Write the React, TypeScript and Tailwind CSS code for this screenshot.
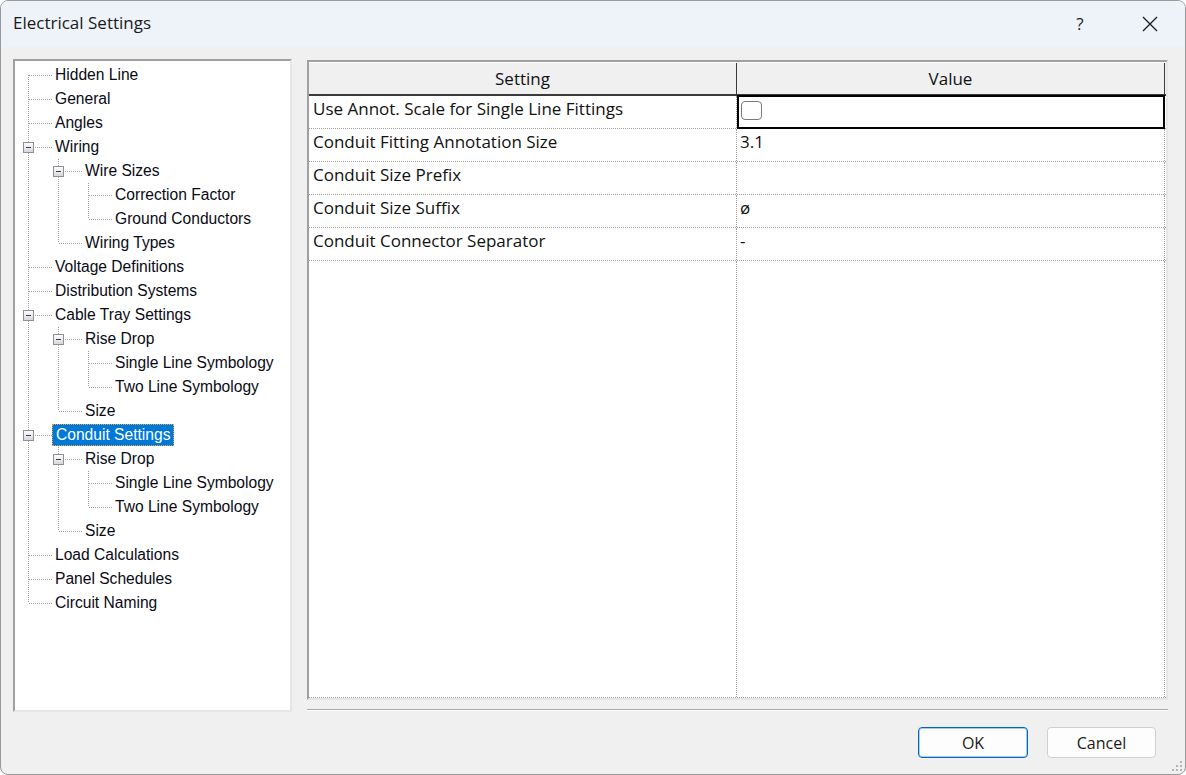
import React from 'react';

type TreeNode = { label: string; level: number; open?: boolean; selected?: boolean };

const tree: TreeNode[] = [
  { label: 'Hidden Line', level: 0 },
  { label: 'General', level: 0 },
  { label: 'Angles', level: 0 },
  { label: 'Wiring', level: 0, open: true },
  { label: 'Wire Sizes', level: 1, open: true },
  { label: 'Correction Factor', level: 2 },
  { label: 'Ground Conductors', level: 2 },
  { label: 'Wiring Types', level: 1 },
  { label: 'Voltage Definitions', level: 0 },
  { label: 'Distribution Systems', level: 0 },
  { label: 'Cable Tray Settings', level: 0, open: true },
  { label: 'Rise Drop', level: 1, open: true },
  { label: 'Single Line Symbology', level: 2 },
  { label: 'Two Line Symbology', level: 2 },
  { label: 'Size', level: 1 },
  { label: 'Conduit Settings', level: 0, open: true, selected: true },
  { label: 'Rise Drop', level: 1, open: true },
  { label: 'Single Line Symbology', level: 2 },
  { label: 'Two Line Symbology', level: 2 },
  { label: 'Size', level: 1 },
  { label: 'Load Calculations', level: 0 },
  { label: 'Panel Schedules', level: 0 },
  { label: 'Circuit Naming', level: 0 },
];

const rows = [
  { setting: 'Use Annot. Scale for Single Line Fittings', value: null },
  { setting: 'Conduit Fitting Annotation Size', value: '3.1' },
  { setting: 'Conduit Size Prefix', value: '' },
  { setting: 'Conduit Size Suffix', value: 'ø' },
  { setting: 'Conduit Connector Separator', value: '-' },
];

// last sibling = no later node on the same level before the parent closes
const isLast = (i: number) => {
  const lvl = tree[i].level;
  for (let j = i + 1; j < tree.length; j++) {
    if (tree[j].level < lvl) return true;
    if (tree[j].level === lvl) return false;
  }
  return true;
};

const ancestorAt = (i: number, lvl: number) => {
  for (let j = i - 1; j >= 0; j--) if (tree[j].level === lvl) return j;
  return -1;
};

const LINE = '#a0a0a0';

const GuideCell: React.FC<{ on: boolean }> = ({ on }) => (
  <svg width="30" height="24" className="shrink-0 block" shapeRendering="crispEdges">
    {on && <line x1="12.5" y1="0" x2="12.5" y2="24" stroke={LINE} strokeDasharray="1 1" />}
  </svg>
);

const ConnectorCell: React.FC<{ first: boolean; last: boolean; open?: boolean }> = ({ first, last, open }) => (
  <svg width="36" height="24" className="shrink-0 block" shapeRendering="crispEdges">
    {!first && <line x1="12.5" y1="0" x2="12.5" y2="12" stroke={LINE} strokeDasharray="1 1" />}
    {!last && <line x1="12.5" y1="12" x2="12.5" y2="24" stroke={LINE} strokeDasharray="1 1" />}
    <line x1="13" y1="12.5" x2="36" y2="12.5" stroke={LINE} strokeDasharray="1 1" />
    {open && (
      <g>
        <defs>
          <linearGradient id="exp" x1="0" y1="0" x2="0" y2="1">
            <stop offset="0" stopColor="#ffffff" />
            <stop offset="1" stopColor="#d6d6d6" />
          </linearGradient>
        </defs>
        <rect x="7.5" y="7.5" width="10" height="10" fill="url(#exp)" stroke="#8f8f8f" rx="1" />
        <line x1="10" y1="12.5" x2="15" y2="12.5" stroke="#2b3f6b" />
      </g>
    )}
  </svg>
);

const Tree: React.FC = () => (
  <div className="w-[279px] h-[653px] shrink-0 bg-white border-2 border-t-[#a0a0a0] border-l-[#a0a0a0] border-r-[#e6e6e6] border-b-[#e6e6e6] pt-[2px] pl-px">
    {tree.map((n, i) => {
      const last = isLast(i);
      return (
        <div key={i} className="flex items-center h-6">
          {Array.from({ length: n.level }).map((_, k) => (
            <GuideCell key={k} on={!isLast(ancestorAt(i, k))} />
          ))}
          <ConnectorCell first={i === 0} last={last} open={n.open} />
          {n.selected ? (
            <span className="h-[22px] flex items-center px-[3px] bg-[#0078d7] text-white border border-dotted border-[#f5a040] whitespace-nowrap">
              {n.label}
            </span>
          ) : (
            <span className="h-[22px] flex items-center px-[3px] text-[#0a0a14] whitespace-nowrap">{n.label}</span>
          )}
        </div>
      );
    })}
  </div>
);

const Grid: React.FC = () => (
  <div className="w-[861px] h-[640px] mt-px flex flex-col bg-white border-2 border-t-[#a0a0a0] border-l-[#a0a0a0] border-r-[#e6e6e6] border-b-[#e6e6e6] font-['Open_Sans',sans-serif] text-[17px] text-[#111]">
    <div className="grid grid-cols-[428px_1fr] h-[34px] bg-[#f0f0f0] border-t border-white border-b-2 border-b-[#3a3a3a]">
      <div className="flex items-center justify-center border-r border-[#3a3a3a]">Setting</div>
      <div className="flex items-center justify-center border-r border-[#3a3a3a] mr-px">Value</div>
    </div>
    {rows.map((r, i) => (
      <div key={i} className="grid grid-cols-[428px_1fr] h-[33px] border-b border-dotted border-[#a0a0a0]">
        <div className="px-[4px] pt-[1px] leading-[23px] border-r border-dotted border-[#a0a0a0] whitespace-nowrap">
          {r.setting}
        </div>
        {r.value === null ? (
          <div className="border-2 border-black -mt-px -mb-px mr-px pl-[2px] pt-[4px]">
            <div className="w-[21px] h-[19px] rounded-[4px] border border-[#7a7a7a] bg-white" />
          </div>
        ) : (
          <div className="px-[3px] pt-[1px] leading-[23px] border-r border-dotted border-[#a0a0a0] mr-px">{r.value}</div>
        )}
      </div>
    ))}
    <div className="flex-1 grid grid-cols-[428px_1fr] border-b border-dotted border-[#a0a0a0]">
      <div className="border-r border-dotted border-[#a0a0a0]" />
      <div className="border-r border-dotted border-[#a0a0a0] mr-px" />
    </div>
  </div>
);

export default function App() {
  return (
    <div className="w-[1186px] h-[775px] relative overflow-hidden rounded-[8px] border border-[#9a9a9a] bg-[#f0f0f0] flex flex-col font-['Liberation_Sans',Arial,sans-serif]">
      {/* title bar */}
      <div className="h-[46px] shrink-0 bg-[#eef3f9] flex items-center pl-[12px] font-['Open_Sans',sans-serif] text-[17px] text-[#1a1a1a]">
        <span className="mt-[-2px]">Electrical Settings</span>
        <div className="ml-auto flex items-center h-full">
          <span className="w-[46px] mr-[12px] text-center text-[17px] text-[#222]">?</span>
          <div className="w-[70px] h-full flex items-center justify-center">
            <svg width="16" height="16" viewBox="0 0 16 16">
              <path d="M1 1 L15 15 M15 1 L1 15" stroke="#1a1a1a" strokeWidth="1.3" />
            </svg>
          </div>
        </div>
      </div>

      {/* body */}
      <div className="flex-1 flex flex-col pl-[12px] pt-[12px] text-[15.6px]">
        <div className="flex">
          <Tree />
          <div className="ml-[15px] flex flex-col">
            <Grid />
            <div className="mt-[9px] h-[2px] w-[861px] border-t border-[#a9a9a9] border-b border-b-white" />
          </div>
        </div>
        <div className="flex justify-end gap-[19px] mt-[15px] pr-[29px] font-['Open_Sans',sans-serif] text-[16px] text-[#1a1a1a]">
          <button className="w-[110px] h-[31px] rounded-[4px] bg-[#fdfdfd] border border-[#0067c0] shadow-[inset_0_0_0_1px_#a9cbef]">OK</button>
          <button className="w-[109px] h-[31px] rounded-[4px] bg-[#fdfdfd] border border-[#d0d0d0]">Cancel</button>
        </div>
      </div>

      {/* size grip */}
      <svg width="12" height="12" className="absolute right-[2px] bottom-[2px]" shapeRendering="crispEdges">
        {[[9, 1], [5, 5], [9, 5], [1, 9], [5, 9], [9, 9]].map(([x, y], i) => (
          <rect key={i} x={x} y={y} width="2" height="2" fill="#b4b4b4" />
        ))}
      </svg>
    </div>
  );
}
